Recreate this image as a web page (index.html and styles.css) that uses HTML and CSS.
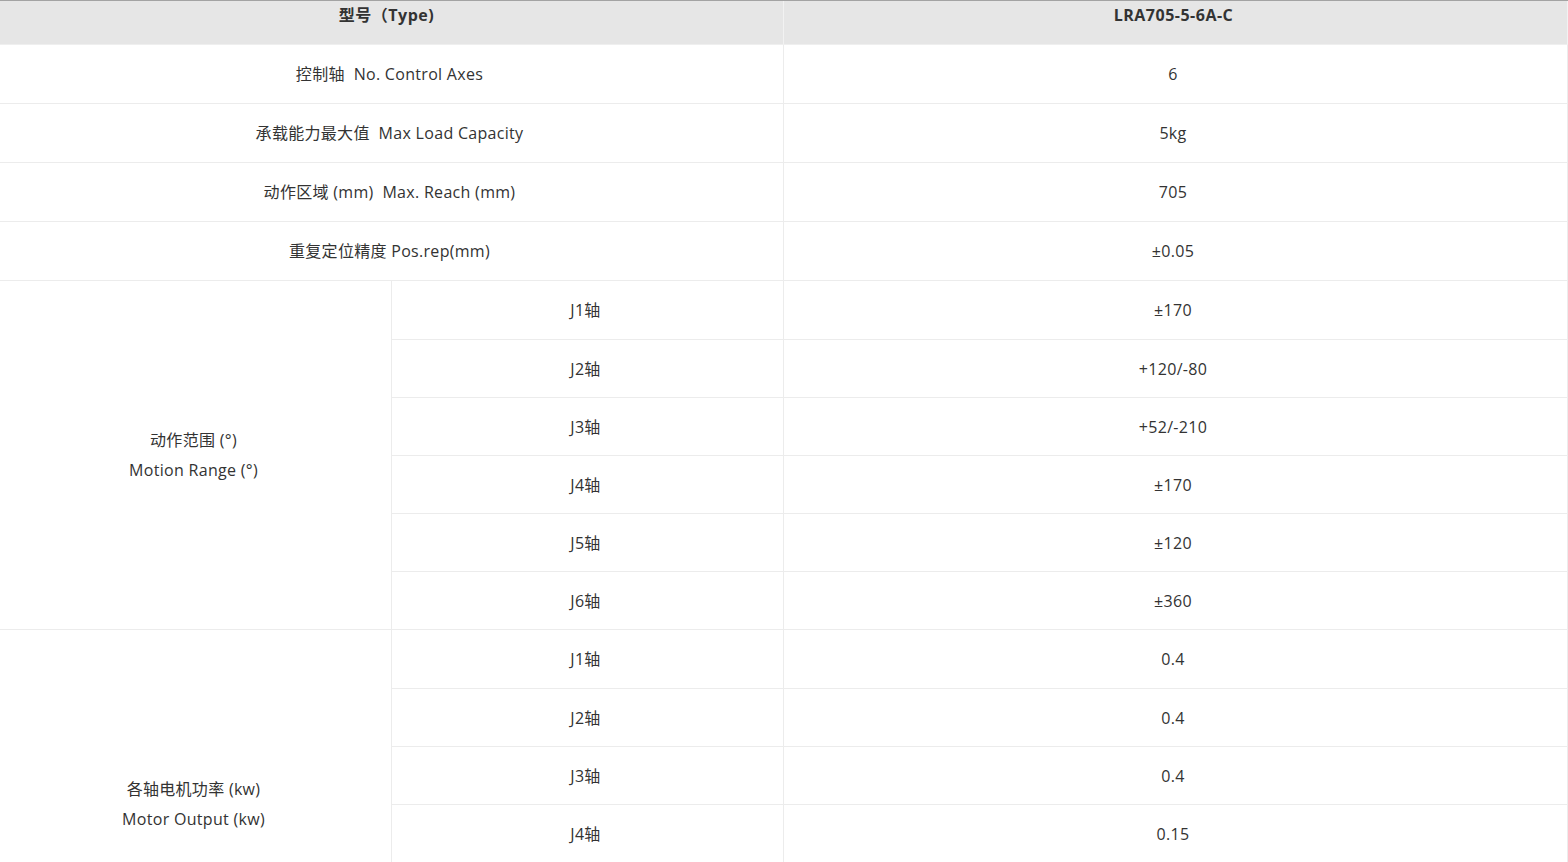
FILE: index.html
```html
<!DOCTYPE html>
<html lang="zh-CN">
<head>
<meta charset="utf-8">
<title>LRA705-5-6A-C</title>
<link rel="stylesheet" href="styles.css">
</head>
<body>
<table class="spec">
  <colgroup>
    <col class="c1"><col class="c2"><col class="c3">
  </colgroup>
  <thead>
    <tr class="head">
      <th colspan="2">型号（Type)</th>
      <th>LRA705-5-6A-C</th>
    </tr>
  </thead>
  <tbody>
    <tr class="tall"><td colspan="2">控制轴&nbsp;&nbsp;No. Control Axes</td><td>6</td></tr>
    <tr class="tall"><td colspan="2">承载能力最大值&nbsp;&nbsp;Max Load Capacity</td><td>5kg</td></tr>
    <tr class="tall"><td colspan="2">动作区域 (mm)&nbsp;&nbsp;Max. Reach (mm)</td><td>705</td></tr>
    <tr class="tall"><td colspan="2">重复定位精度 Pos.rep(mm)</td><td>±0.05</td></tr>
    <tr class="tall"><td rowspan="6" class="group">动作范围 (°)<br>Motion Range (°)</td><td>J1轴</td><td>±170</td></tr>
    <tr><td>J2轴</td><td>+120/-80</td></tr>
    <tr><td>J3轴</td><td>+52/-210</td></tr>
    <tr><td>J4轴</td><td>±170</td></tr>
    <tr><td>J5轴</td><td>±120</td></tr>
    <tr><td>J6轴</td><td>±360</td></tr>
    <tr class="tall"><td rowspan="6" class="group">各轴电机功率 (kw)<br>Motor Output (kw)</td><td>J1轴</td><td>0.4</td></tr>
    <tr><td>J2轴</td><td>0.4</td></tr>
    <tr><td>J3轴</td><td>0.4</td></tr>
    <tr><td>J4轴</td><td>0.15</td></tr>
    <tr><td>J5轴</td><td>0.1</td></tr>
    <tr><td>J6轴</td><td>0.1</td></tr>
  </tbody>
</table>
</body>
</html>
```

FILE: styles.css
```css
html, body {
  margin: 0;
  padding: 0;
  background: #fff;
}

body {
  font-family: "Open Sans", "Noto Sans CJK SC", sans-serif;
  font-size: 16px;
  color: #333;
}

.spec {
  width: 1568px;
  border-collapse: separate;
  border-spacing: 0;
  table-layout: fixed;
  border-top: 1px solid #a3a3a3;
}

.c1 { width: 392px; }
.c2 { width: 392px; }
.c3 { width: 784px; }

.spec th,
.spec td {
  box-sizing: border-box;
  padding: 0 4px 0 0;
  text-align: center;
  border-bottom: 1px solid #ececec;
  border-right: 1px solid #ececec;
  line-height: 22px;
  letter-spacing: 0.3px;
}

.spec td:last-child {
  padding-right: 5px;
}

.head th {
  background: #e6e6e6;
  font-weight: 700;
  height: 44px;
  vertical-align: top;
  padding-top: 3px;
  padding-right: 10px;
  letter-spacing: 0.5px;
  border-bottom: 1px solid #efefef;
  border-right: 1px solid #f2f2f2;
}

.head th:last-child {
  padding-right: 4px;
}

.spec td {
  height: 58px;
  vertical-align: middle;
}

.spec tr.tall td {
  height: 59px;
}

.spec td.group {
  line-height: 30px;
}
```
